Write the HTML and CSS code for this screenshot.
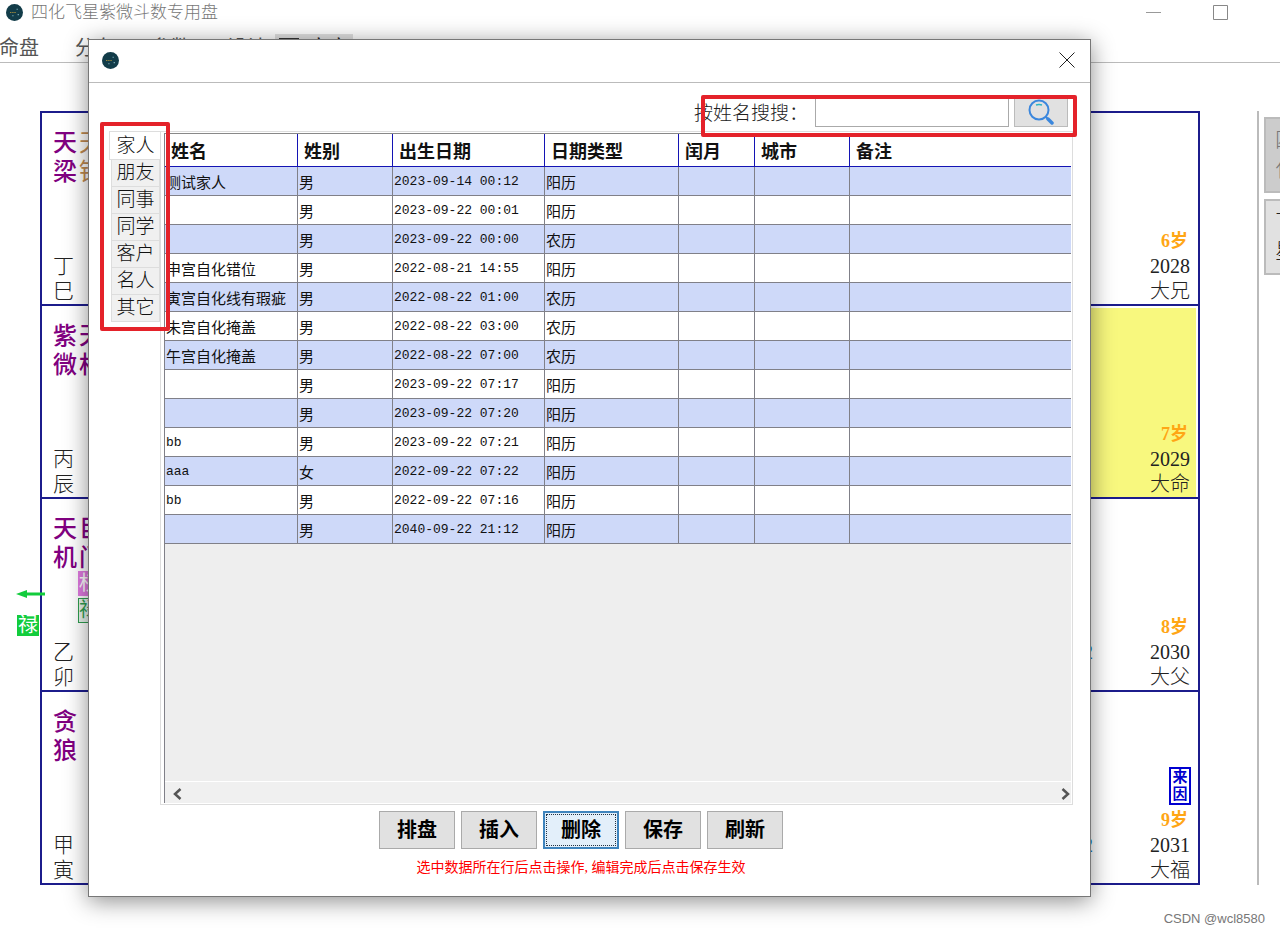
FILE: index.html
```
<!DOCTYPE html>
<html lang="zh-CN">
<head>
<meta charset="utf-8">
<title>四化飞星紫微斗数专用盘</title>
<link rel="stylesheet" href="styles.css">
</head>
<body>
<div class="app">
  <header class="titlebar">
    <svg class="logo" viewBox="0 0 16 16"><circle cx="8" cy="8" r="8" fill="#123c49"/><path d="M4 8h1M6 8h1M8 8h1" stroke="#c9a13a"/><path d="M10 5h1M11 10h1M6 11h1" stroke="#8fc3cf"/></svg>
    <h1 class="title">四化飞星紫微斗数专用盘</h1>
    <svg class="win-icon" viewBox="0 0 15 15"><path d="M0 7.500h15" stroke="#999"/></svg>
    <svg class="win-icon" viewBox="0 0 15 15"><path d="M.5.500h14v14H.5z" fill="none" stroke="#888"/></svg>
  </header>
  <nav class="menubar">
    <button class="menu">命盘</button>
    <button class="menu">分布</button>
    <button class="menu">参数</button>
    <button class="menu">设计</button>
    <button class="menu menu-on"><span class="menu-box"></span>文字</button>
  </nav>
  <main class="workspace">
    <section class="chart">
      <div class="palace-row">
        <div class="palace">
          <div class="stars"><span class="star">天梁</span><span class="star minor">天钺</span></div>
          <div class="stem">丁巳</div>
        </div>
        <div class="palace fate"><b class="age">6岁</b><span class="year">2028</span><span class="limit">大兄</span></div>
      </div>
      <div class="palace-row">
        <div class="palace">
          <div class="stars"><span class="star">紫微</span><span class="star">天相</span></div>
          <div class="stem">丙辰</div>
        </div>
        <div class="palace fate current"><b class="age">7岁</b><span class="year">2029</span><span class="limit">大命</span></div>
      </div>
      <div class="palace-row">
        <div class="palace">
          <div class="stars"><span class="star">天机</span><span class="star">巨门</span></div>
          <div class="marks"><span class="mark mark-power">权</span><span class="mark mark-luck">禄</span></div>
          <div class="stem">乙卯</div>
          <div class="outflow">
            <svg class="arrow" viewBox="0 0 30 10"><path d="M0 5 11 1v2.500h18v3H11V9z" fill="#12cc3c"/></svg>
            <span class="outflow-tag">禄</span>
          </div>
        </div>
        <div class="palace fate"><b class="age">8岁</b><span class="year"><i class="score">2</i>2030</span><span class="limit">大父</span></div>
      </div>
      <div class="palace-row">
        <div class="palace">
          <div class="stars"><span class="star">贪狼</span></div>
          <div class="stem">甲寅</div>
        </div>
        <div class="palace fate"><span class="origin">来因</span><b class="age">9岁</b><span class="year"><i class="score">2</i>2031</span><span class="limit">大福</span></div>
      </div>
    </section>
    <aside class="side">
      <button class="side-btn side-on">四化</button>
      <button class="side-btn">飞星</button>
    </aside>
  </main>
  <footer class="watermark">CSDN @wcl8580</footer>

  <section class="dialog" role="dialog" aria-label="命例">
    <header class="dialog-head">
      <svg class="logo" viewBox="0 0 16 16"><circle cx="8" cy="8" r="8" fill="#123c49"/><path d="M4 8h1M6 8h1M8 8h1" stroke="#c9a13a"/><path d="M10 5h1M11 10h1M6 11h1" stroke="#8fc3cf"/></svg>
      <button class="close" aria-label="关闭"><svg viewBox="0 0 16 16"><path d="M.5.500l15 15M15.500.500l-15 15" stroke="#222" fill="none"/></svg></button>
    </header>
    <form class="search">
      <label for="q">按姓名搜搜：</label>
      <input id="q" class="search-box" type="text">
      <button class="search-btn" type="button" aria-label="搜索"><svg viewBox="0 0 26 26"><circle cx="11" cy="11" r="9.500" fill="none" stroke="#3b87dd" stroke-width="2"/><path d="M8 6q3-1 6 0" fill="none" stroke="#2bb5c4" stroke-width="1.500"/><path d="m18 18 2 2" stroke="#3b87dd" stroke-width="2"/><path d="m20 20 4 4" stroke="#3b87dd" stroke-width="3.500" stroke-linecap="round"/></svg></button>
    </form>
    <div class="content">
      <div class="tabs" role="tablist">
        <button class="tab tab-on" role="tab" aria-selected="true">家人</button>
        <button class="tab" role="tab">朋友</button>
        <button class="tab" role="tab">同事</button>
        <button class="tab" role="tab">同学</button>
        <button class="tab" role="tab">客户</button>
        <button class="tab" role="tab">名人</button>
        <button class="tab" role="tab">其它</button>
      </div>
      <div class="panel">
        <div class="sheet">
          <table class="people">
            <colgroup><col class="c-name"><col class="c-sex"><col class="c-date"><col class="c-type"><col class="c-leap"><col class="c-city"><col></colgroup>
            <thead><tr><th>姓名</th><th>姓别</th><th>出生日期</th><th>日期类型</th><th>闰月</th><th>城市</th><th>备注</th></tr></thead>
            <tbody>
              <tr><td>测试家人</td><td>男</td><td class="latin">2023-09-14 00:12</td><td>阳历</td><td></td><td></td><td></td></tr>
              <tr><td></td><td>男</td><td class="latin">2023-09-22 00:01</td><td>阳历</td><td></td><td></td><td></td></tr>
              <tr><td></td><td>男</td><td class="latin">2023-09-22 00:00</td><td>农历</td><td></td><td></td><td></td></tr>
              <tr><td>申宫自化错位</td><td>男</td><td class="latin">2022-08-21 14:55</td><td>阳历</td><td></td><td></td><td></td></tr>
              <tr><td>寅宫自化线有瑕疵</td><td>男</td><td class="latin">2022-08-22 01:00</td><td>农历</td><td></td><td></td><td></td></tr>
              <tr><td>未宫自化掩盖</td><td>男</td><td class="latin">2022-08-22 03:00</td><td>农历</td><td></td><td></td><td></td></tr>
              <tr><td>午宫自化掩盖</td><td>男</td><td class="latin">2022-08-22 07:00</td><td>农历</td><td></td><td></td><td></td></tr>
              <tr><td></td><td>男</td><td class="latin">2023-09-22 07:17</td><td>阳历</td><td></td><td></td><td></td></tr>
              <tr><td></td><td>男</td><td class="latin">2023-09-22 07:20</td><td>阳历</td><td></td><td></td><td></td></tr>
              <tr><td class="latin">bb</td><td>男</td><td class="latin">2023-09-22 07:21</td><td>阳历</td><td></td><td></td><td></td></tr>
              <tr><td class="latin">aaa</td><td>女</td><td class="latin">2022-09-22 07:22</td><td>阳历</td><td></td><td></td><td></td></tr>
              <tr><td class="latin">bb</td><td>男</td><td class="latin">2022-09-22 07:16</td><td>阳历</td><td></td><td></td><td></td></tr>
              <tr><td></td><td>男</td><td class="latin">2040-09-22 21:12</td><td>阳历</td><td></td><td></td><td></td></tr>
            </tbody>
          </table>
          <div class="scrollbar">
            <svg viewBox="0 0 10 12"><path d="M8.500 1 3 6l5.500 5" fill="none" stroke="#555" stroke-width="2.500"/></svg>
            <svg viewBox="0 0 10 12"><path d="M1.500 1 7 6l-5.500 5" fill="none" stroke="#555" stroke-width="2.500"/></svg>
          </div>
        </div>
      </div>
    </div>
    <div class="actions">
      <button class="action">排盘</button>
      <button class="action">插入</button>
      <button class="action action-focus">删除</button>
      <button class="action">保存</button>
      <button class="action">刷新</button>
    </div>
    <p class="hint">选中数据所在行后点击操作, 编辑完成后点击保存生效</p>
    <div class="callout callout-tabs"></div>
    <div class="callout callout-search"></div>
  </section>
</div>
</body>
</html>
```
FILE: styles.css
```
* { box-sizing: border-box; }
body { margin: 0; background: #fff; color: #222; font-family: "Liberation Serif", "Noto Sans CJK SC", serif; overflow: hidden; }
button { margin: 0; padding: 0; border: 0; background: none; font: inherit; color: inherit; }
.app { position: relative; display: flex; flex-direction: column; height: 100vh; overflow: hidden; }

.titlebar { display: flex; align-items: center; gap: 52px; height: 24px; padding: 0 52px 0 6px; }
.logo { width: 17px; height: 17px; flex: none; }
.title { flex: 1; margin: 0 0 0 -44px; padding-top: 2px; font-size: 17px; line-height: 24px; font-weight: 300; color: #777; }
.win-icon { width: 15px; height: 15px; }

.menubar { display: flex; gap: 36px; height: 39px; border-bottom: 1px solid #bbb; font-size: 20px; }
.menu { height: 28px; margin-top: 10px; line-height: 28px; color: #555; }
.menu:first-child { margin-left: -1px; }
.menu-on { display: flex; align-items: center; gap: 10px; margin-left: -28px; padding: 0 4px; background: #e0e0e0; color: #222; }
.menu-box { width: 20px; height: 20px; border: 2px solid #333; }

.workspace { flex: 1; display: flex; justify-content: space-between; padding: 48px 0 0 40px; min-height: 0; }
.chart { flex: 1; display: grid; grid-template-rows: repeat(4, 1fr); margin-right: 57px; border: 2px solid #1c1c8c; border-bottom: 0; }
.palace-row { display: flex; justify-content: space-between; border-bottom: 2px solid #1c1c8c; }
.palace { position: relative; display: flex; flex-direction: column; width: 25%; padding: 16px 11px 0; }
.stars { display: flex; gap: 2px; }
.star { width: 24px; font-size: 24px; line-height: 29px; font-weight: 500; color: #800080; }
.minor { color: #c08a50; font-weight: 400; }
.marks { display: flex; flex-direction: column; gap: 2px; margin: -2px 0 0 25px; }
.mark { width: 25px; font-size: 20px; line-height: 23px; border: 1px solid; }
.mark-power { background: #e07ae0; border-color: #e07ae0; color: #fff; }
.mark-luck { background: #e8f3ec; border-color: #2f9e50; color: #2f9e50; }
.stem { width: 21px; margin-top: auto; font-size: 21px; line-height: 25px; font-weight: 300; }
.outflow { position: absolute; top: 90px; left: -26px; display: flex; flex-direction: column; gap: 16px; }
.arrow { width: 30px; height: 10px; }
.outflow-tag { width: 22px; font-size: 20px; line-height: 21px; margin-left: 1px; text-align: center; background: #12cc3c; color: #fff; }
.fate { align-items: flex-end; justify-content: flex-end; padding: 0 8px 0 0; font-size: 20px; line-height: 25px; font-weight: 300; }
.age { font-size: 18px; font-weight: 700; color: #ffa615; margin-right: 2px; }
.score { margin-right: 57px; font-style: normal; color: #1272c4; }
.current { margin: 2px 2px 0 0; background: #f8f87e; padding-right: 6px; }
.origin { width: 22px; margin: 0 -1px 3px 0; border: 2px solid #0000d0; font-size: 15px; line-height: 17px; font-weight: 700; text-align: center; color: #0000d0; padding: 0 1px; }
.side { width: 23px; overflow: hidden; border-left: 2px solid #bbb; padding: 6px 0 0 5px; }
.side-btn { display: block; width: 60px; height: 76px; margin-bottom: 6px; padding: 0 28px 0 9px; border: 2px solid #bbb; background: #e1e1e1; font-size: 21px; line-height: 29px; font-weight: 300; text-align: left; }
.side-on { background: #ccc; color: #777; }
.watermark { height: 48px; padding: 0 15px; text-align: right; font: 13px/67px "Liberation Sans", sans-serif; color: #777; }

.dialog { position: absolute; top: 39px; right: 189px; bottom: 36px; left: 88px; display: flex; flex-direction: column; background: #fff; border: 1px solid #777; box-shadow: 0 4px 22px rgba(0, 0, 0, .45); }
.dialog-head { display: flex; flex: none; justify-content: space-between; align-items: center; height: 43px; padding: 0 15px 2px 13px; border-bottom: 1px solid #bbb; }
.close { width: 16px; height: 16px; }
.close svg, .search-btn svg { display: block; }
.search { display: flex; align-items: center; justify-content: flex-end; height: 48px; flex: none; padding: 10px 22px 2px 0; font-size: 19px; font-weight: 300; }
.search-box { width: 194px; height: 31px; margin: 0 5px 0 7px; border: 1px solid #aaa; background: #fff; font: inherit; }
.search-btn { width: 54px; height: 32px; padding: 3px 13px; border: 1px solid #bbb; background: #e1e1e1; }

.content { display: flex; flex: 1; min-height: 0; padding: 0 17px 0 20px; }
.tabs { display: flex; flex-direction: column; width: 51px; }
.tab { height: 27px; margin-left: 2px; border: 1px solid #ddd; border-top: 0; background: #f0f0f0; font-size: 19px; line-height: 26px; font-weight: 300; color: #111; }
.tab-on { height: 29px; margin: 0 -1px 0 0; border-top: 1px solid #ddd; border-right: 0; background: #fff; }
.panel { flex: 1; min-width: 0; display: flex; padding: 1px 1px 1px 3px; border: 1px solid #ddd; }
.sheet { flex: 1; display: flex; flex-direction: column; border-left: 1px solid #808088; border-top: 1px solid #888; background: #eee; }
.people { width: 100%; border-spacing: 0; table-layout: fixed; }
.c-name { width: 133px; }
.c-sex { width: 95px; }
.c-date { width: 152px; }
.c-type { width: 134px; }
.c-leap { width: 76px; }
.c-city { width: 95px; }
.people th { height: 33px; padding: 3px 0 0 6px; border-right: 1px solid #1414b4; border-bottom: 1px solid #1414b4; background: #fff; text-align: left; font-size: 18px; line-height: 28px; color: #111; }
.people td { height: 29px; padding: 2px 1px 0; border-right: 1px solid #808088; border-bottom: 1px solid #808088; background: #fff; font: 400 15px/26px "Noto Sans CJK SC", sans-serif; color: #111; white-space: nowrap; }
.people .latin { font: 400 13px/26px "Liberation Mono", monospace; }
.people tr:nth-child(odd) td { background: #ced9f9; }
.people th:last-child, .people td:last-child { border-right: 0; }
.scrollbar { display: flex; justify-content: space-between; align-items: center; height: 22px; margin-top: auto; padding: 3px 0 0 7px; border-top: 1px solid #fff; background: #f0f0f0; }
.scrollbar svg { width: 10px; height: 12px; }

.actions { display: flex; flex: none; justify-content: center; gap: 6px; padding: 6px 17px 0 0; }
.action { width: 76px; height: 38px; border: 1px solid #aaa; background: #e1e1e1; font-size: 20px; line-height: 34px; font-weight: 700; color: #000; }
.action-focus { border: 2px solid #3f84bd; background: #e3effa; outline: 1px dotted #234; outline-offset: -4px; }
.hint { flex: none; margin: 0; padding: 8px 17px 17px 0; text-align: center; font-size: 14px; line-height: 22px; color: #f00; }
.callout { position: absolute; border: 4px solid #e4222a; border-radius: 2px; pointer-events: none; }
.callout-tabs { top: 82px; left: 11px; width: 70px; height: 209px; }
.callout-search { top: 55px; right: 13px; width: 376px; height: 42px; }
```
